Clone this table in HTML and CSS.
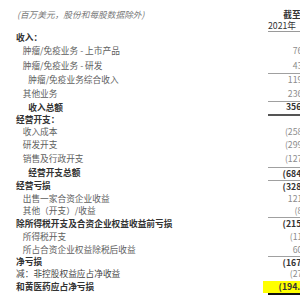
FILE: index.html
```html
<!DOCTYPE html>
<html lang="zh-CN">
<head>
<meta charset="utf-8">
<title>和黄医药 2021 财务摘要</title>
<link rel="stylesheet" href="styles.css">
</head>
<body>
<div class="sheet">
  <div class="l cap">(百万美元，股份和每股数据除外)</div>
  <div class="n hd1">截至十二月三十一日止年度</div>
  <div class="l"></div>
  <div class="n hd2">2021年</div>

  <div class="l b">收入：</div><div class="n"></div>
  <div class="l l1">肿瘤/免疫业务 - 上市产品</div><div class="n"><span class="pos">76.3</span></div>
  <div class="l l1">肿瘤/免疫业务 - 研发</div><div class="n"><span class="pos">43.3</span></div>
  <div class="l l2">肿瘤/免疫业务综合收入</div><div class="n t"><span class="pos">119.6</span></div>
  <div class="l l1">其他业务</div><div class="n"><span class="pos">236.5</span></div>
  <div class="l l2 b">收入总额</div><div class="n t tb nb"><span class="pos">356.1</span></div>

  <div class="l b">经营开支：</div><div class="n"></div>
  <div class="l l1">收入成本</div><div class="n">(258.9)</div>
  <div class="l l1">研发开支</div><div class="n">(299.1)</div>
  <div class="l l1">销售及行政开支</div><div class="n">(127.2)</div>
  <div class="l l2 b">经营开支总额</div><div class="n t nb">(684.2)</div>

  <div class="l b">经营亏损</div><div class="n t nb">(328.1)</div>
  <div class="l l1">出售一家合资企业收益</div><div class="n"><span class="pos">121.6</span></div>
  <div class="l l1">其他（开支）/收益</div><div class="n">(8.8)</div>
  <div class="l b">除所得税开支及合资企业权益收益前亏损</div><div class="n t nb">(215.3)</div>
  <div class="l l1">所得税开支</div><div class="n">(11.2)</div>
  <div class="l l1">所占合资企业权益除税后收益</div><div class="n"><span class="pos">60.5</span></div>
  <div class="l b">净亏损</div><div class="n t nb">(167.3)</div>
  <div class="l dk">减：非控股权益应占净收益</div><div class="n">(27.3)</div>
  <div class="l b">和黄医药应占净亏损</div><div class="n nb fin"><span class="hl">(194.6)</span></div>
</div>
</body>
</html>
```
FILE: styles.css
```css
html, body {
  margin: 0;
  padding: 0;
  background: #ffffff;
  overflow: hidden;
}

body {
  width: 300px;
  height: 300px;
  font-family: "Noto Sans CJK SC", "Noto Sans", sans-serif;
  font-size: 8.7px;
  line-height: 1;
  color: #5e5e5e;
}

.sheet {
  display: grid;
  grid-template-columns: 252px 62px;
  grid-template-rows: 13.5px 9.5px 12.5px 14.4px 14.1px 14px 14px 14.7px 10.2px 12.85px 13.85px 14.6px 13.3px 12.7px 12.3px 11.8px 13.9px 13.2px 12.1px 12px 12px 14.5px;
  padding: 9px 0 0 16px;
  width: max-content;
}

.l,
.n {
  display: flex;
  align-items: center;
  white-space: nowrap;
  box-sizing: border-box;
}

.l1 { padding-left: 6.7px; }
.l2 { padding-left: 12.3px; }

.b {
  font-weight: bold;
  color: #333333;
}

.dk { color: #444444; }

.cap {
  font-style: italic;
  color: #7a7a7a;
  padding-left: 1px;
}

.n {
  justify-content: flex-end;
  padding-right: 17.5px;
  color: #8c8c8c;
}

.hd1 {
  justify-content: flex-start;
  padding-left: 15.3px;
  font-weight: bold;
  color: #333333;
}

.hd2 {
  justify-content: flex-start;
  padding-left: 0;
  color: #333333;
  border-bottom: 1px solid #9a9a9a;
}

.t { border-top: 1px solid #a0a0a0; }

.tb { border-bottom: 2px solid #555555; }

.nb {
  font-weight: bold;
  color: #333333;
}

.pos::after {
  content: ")";
  visibility: hidden;
}

.fin {
  padding-right: 0;
  align-items: stretch;
  border-bottom: 2px solid #111111;
}

.hl {
  flex: 1;
  display: flex;
  align-items: center;
  justify-content: flex-end;
  margin: 1px 0 0 -5px;
  padding-right: 21.5px;
  background: #ffff00;
}
```
